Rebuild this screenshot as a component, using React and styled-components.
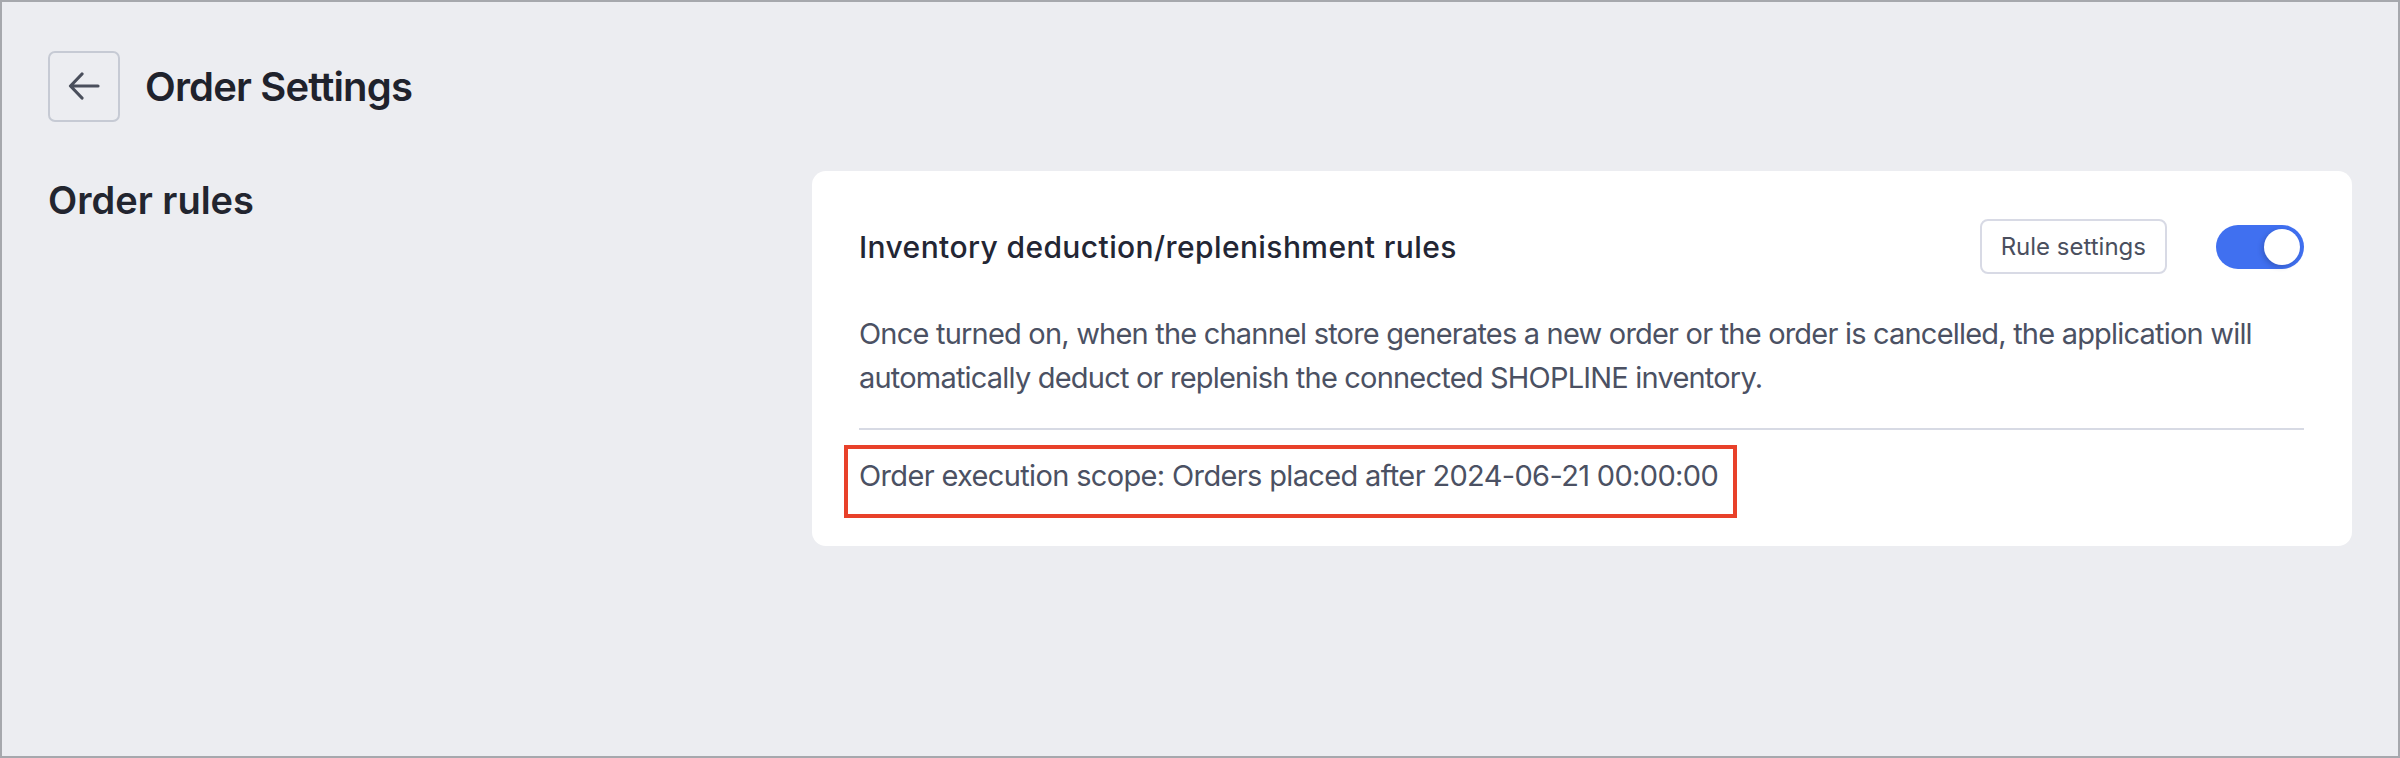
import React, { useState } from 'react';
import styled, { createGlobalStyle } from 'styled-components';

const GlobalStyle = createGlobalStyle`
  html, body {
    margin: 0;
    padding: 0;
  }
  body {
    font-family: Inter, "Noto Sans", "Liberation Sans", sans-serif;
    -webkit-font-smoothing: antialiased;
  }
  * {
    box-sizing: border-box;
  }
`;

const Page = styled.div`
  width: 2400px;
  height: 758px;
  border: 2px solid #a6a8ad;
  background: #ecedf1;
  padding: 48px 46px 0 46px;
  overflow: hidden;
`;

const Header = styled.header`
  display: flex;
  align-items: center;
  gap: 25px;
  height: 72px;
`;

const BackButton = styled.button`
  width: 72px;
  height: 71px;
  display: flex;
  align-items: center;
  justify-content: center;
  padding: 0;
  border: 2px solid #c6cad4;
  border-radius: 7px;
  background: transparent;
  color: #4a4f5c;
  cursor: pointer;
`;

const Title = styled.h1`
  margin: 0;
  font-size: 40px;
  font-weight: 600;
  color: #1f222c;
  letter-spacing: -0.85px;
`;

const Content = styled.div`
  display: grid;
  grid-template-columns: 764px 1fr;
  margin-top: 49px;
  align-items: start;
`;

const SectionTitle = styled.h2`
  margin: 0;
  padding-top: 4px;
  font-size: 38px;
  line-height: 50px;
  font-weight: 600;
  color: #22252f;
`;

const Card = styled.section`
  background: #ffffff;
  border-radius: 14px;
  padding: 48px 48px 28px 47px;
`;

const CardHead = styled.div`
  display: flex;
  align-items: center;
  height: 55px;
`;

const CardTitle = styled.h3`
  flex: 1;
  margin: 0;
  font-size: 30px;
  font-weight: 500;
  letter-spacing: 0.4px;
  color: #232634;
`;

const GhostButton = styled.button`
  height: 55px;
  padding: 0 19px;
  margin-right: 49px;
  border: 2px solid #d8dae5;
  border-radius: 8px;
  background: #ffffff;
  font-family: inherit;
  font-size: 24px;
  color: #4a4f5e;
  cursor: pointer;
`;

const Switch = styled.button`
  position: relative;
  width: 88px;
  height: 44px;
  padding: 0;
  border: none;
  border-radius: 22px;
  background: ${(p) => (p.$on ? '#4070f0' : '#c9ccd6')};
  cursor: pointer;
`;

const Knob = styled.span`
  position: absolute;
  top: 4px;
  left: ${(p) => (p.$on ? '48px' : '4px')};
  width: 36px;
  height: 36px;
  border-radius: 50%;
  background: #ffffff;
  box-shadow: -2px 2px 5px rgba(20, 30, 80, 0.25);
`;

const Description = styled.p`
  margin: 38px 0 0 0;
  font-size: 29px;
  line-height: 44px;
  letter-spacing: -0.8px;
  color: #4b5163;
`;

const Divider = styled.hr`
  margin: 28px 0 0 0;
  border: none;
  height: 2px;
  background: #d7dae4;
`;

const ScopeNote = styled.div`
  display: inline-block;
  margin: 15px 0 0 -15px;
  padding: 5px 15px 16px 11px;
  border: 4px solid #e8412a;
  font-size: 29px;
  line-height: 44px;
  letter-spacing: -0.65px;
  color: #4b5163;
`;

function ArrowLeft() {
  return (
    <svg width="32" height="28" viewBox="0 0 32 28" fill="none">
      <path
        d="M14 2 L2.5 14 L14 26 M3 14 H30"
        stroke="currentColor"
        strokeWidth="3.2"
        strokeLinecap="round"
        strokeLinejoin="round"
      />
    </svg>
  );
}

export default function App() {
  const [enabled, setEnabled] = useState(true);

  return (
    <>
      <GlobalStyle />
      <Page>
        <Header>
          <BackButton aria-label="Back">
            <ArrowLeft />
          </BackButton>
          <Title>Order Settings</Title>
        </Header>

        <Content>
          <SectionTitle>Order rules</SectionTitle>

          <Card>
            <CardHead>
              <CardTitle>Inventory deduction/replenishment rules</CardTitle>
              <GhostButton>Rule settings</GhostButton>
              <Switch
                role="switch"
                aria-checked={enabled}
                $on={enabled}
                onClick={() => setEnabled(!enabled)}
              >
                <Knob $on={enabled} />
              </Switch>
            </CardHead>

            <Description>
              Once turned on, when the channel store generates a new order or the order is cancelled, the application will
              <br />
              automatically deduct or replenish the connected SHOPLINE inventory.
            </Description>

            <Divider />

            <ScopeNote>Order execution scope: Orders placed after 2024-06-21 00:00:00</ScopeNote>
          </Card>
        </Content>
      </Page>
    </>
  );
}
